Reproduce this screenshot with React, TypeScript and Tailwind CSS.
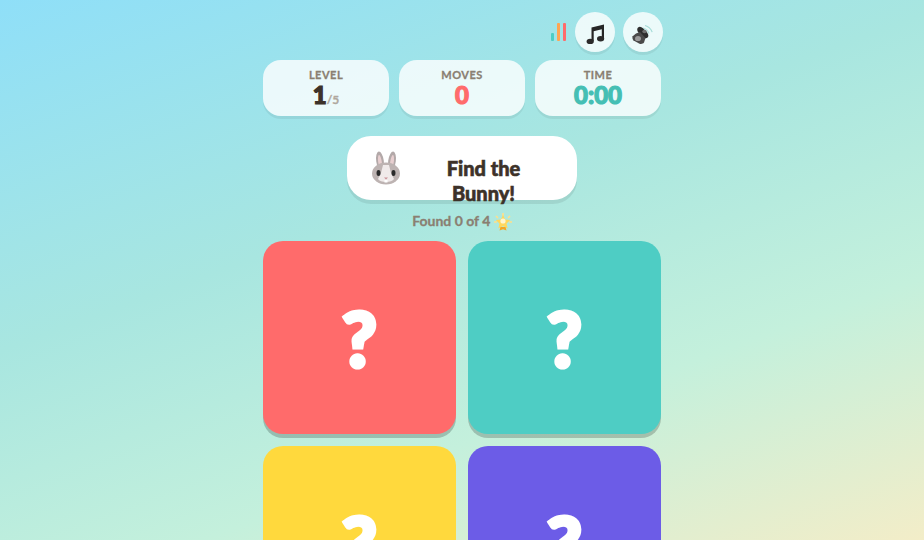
import React from 'react';

const display = "font-['Lato','Noto_Sans',sans-serif]";

const stats = [
  { label: 'LEVEL', value: '1', color: 'text-[#3d3229]', suffix: '/5' },
  { label: 'MOVES', value: '0', color: 'text-[#ff6b6b]' },
  { label: 'TIME', value: '0:00', color: 'text-[#45bfb4]' },
];

const cards = ['bg-[#ff6b6b]', 'bg-[#4ecdc4]', 'bg-[#ffd93d]', 'bg-[#6c5ce7]'];

const NoteIcon = () => (
  <svg width="24" height="24" viewBox="0 0 24 24" className="mt-[4px] ml-[2px]">
    <path d="M7.5 5.5 20 2.5v14h-2.2V7.2L9.7 9.2V19H7.5z" fill="#262626" />
    <ellipse cx="6.2" cy="19.4" rx="3.6" ry="2.7" fill="#2b2b2b" />
    <ellipse cx="16.6" cy="16.8" rx="3.6" ry="2.7" fill="#2b2b2b" />
  </svg>
);

const SpeakerIcon = () => (
  <svg width="26" height="26" viewBox="0 0 26 26" className="mt-[3px]">
    <path d="M15 4.5c3 .8 6 3.4 7.2 6.6" fill="none" stroke="#a6dcd8" strokeWidth="1.2" />
    <path d="M13 7c2.4.6 5 2.8 6 5.5" fill="none" stroke="#b4e2de" strokeWidth="1.2" />
    <path d="M8 6.5c1.6-1.2 3.2-.8 5 .8l4 4.2c1.6 2 1.8 3.6.6 5-1.4 1.2-3 .8-5-.8L8.4 11.6C7 9.8 6.8 7.8 8 6.5z" fill="#2e2e2e" />
    <path d="M6 12.5l4-1.5 5.5 6-1.5 4.5c-1 1.5-3 1.7-4.5 1.2L4.5 20c-1.8-1-2.6-3-1.8-4.8z" fill="#4a4a4a" />
    <ellipse cx="8" cy="17.5" rx="3" ry="2.6" fill="#9a9a9a" />
    <ellipse cx="14.5" cy="10.5" rx="2.2" ry="1.8" fill="#6f6f6f" />
  </svg>
);

const BunnyIcon = () => (
  <svg width="32" height="34" viewBox="0 0 32 34">
    <ellipse cx="10" cy="10" rx="3.8" ry="9.5" fill="#b3a9a9" transform="rotate(-8 10 10)" />
    <ellipse cx="22" cy="10" rx="3.8" ry="9.5" fill="#b3a9a9" transform="rotate(8 22 10)" />
    <ellipse cx="10" cy="11" rx="1.8" ry="7" fill="#e8cfd0" transform="rotate(-8 10 11)" />
    <ellipse cx="22" cy="11" rx="1.8" ry="7" fill="#e8cfd0" transform="rotate(8 22 11)" />
    <ellipse cx="16" cy="22.5" rx="14" ry="11" fill="#bdb3b2" />
    <path d="M13 14h6l2 8 3 6c-2 4-14 4-16 0l3-6z" fill="#f0eaea" />
    <ellipse cx="8.5" cy="22" rx="2" ry="3" fill="#2b2b2b" />
    <ellipse cx="23.5" cy="22" rx="2" ry="3" fill="#2b2b2b" />
    <path d="M14 26.5h4l-2 2z" fill="#c98f96" />
    <rect x="14.5" y="29" width="3" height="2.5" fill="#fff" />
  </svg>
);

const StarIcon = () => (
  <svg width="18" height="18" viewBox="0 0 18 18" className="-my-[2px] inline-block align-[-3px]">
    <path d="M9 0v3M2 3l2 2M16 3l-2 2M0 9h3M18 9h-3" stroke="#ffe08a" strokeWidth="1.6" />
    <path d="M9 2l2.2 4.5 5 .6-3.6 3.4 1 5L9 13l-4.6 2.5 1-5L1.800 7.100l5-.6z" fill="#ffd75e" />
    <circle cx="9" cy="8" r="2.6" fill="#fff6d0" />
    <path d="M6.500 14h5l1 3.500-3.500-1.300-3.500 1.300z" fill="#f5a623" />
  </svg>
);

const App: React.FC = () => {
  return (
    <div className={`h-[540px] w-[924px] overflow-hidden bg-[linear-gradient(160deg,#8fdff8_0%,#a8e6e0_40%,#c4f0dc_70%,#f3edc8_100%)] ${display}`}>
      <div className="mx-auto flex w-[398px] flex-col">
        {/* Top controls */}
        <div className="-mr-[2px] flex h-[48px] items-start justify-end gap-2 pt-[12px]">
          <div className="mt-[11px] mr-[1px] flex h-[18px] items-end gap-[3px]">
            <div className="h-[8px] w-[3px] rounded-[1px] bg-[#4ecdc4]" />
            <div className="h-[18px] w-[3px] rounded-[1px] bg-[#ffa552]" />
            <div className="h-[18px] w-[3px] rounded-[1px] bg-[#ff6b6b]" />
          </div>
          <div className="flex h-10 w-10 items-center justify-center rounded-full bg-white/80 shadow-[0_3px_0_rgba(0,0,0,0.06)]"><NoteIcon /></div>
          <div className="flex h-10 w-10 items-center justify-center rounded-full bg-white/80 shadow-[0_3px_0_rgba(0,0,0,0.06)]"><SpeakerIcon /></div>
        </div>

        {/* Stats */}
        <div className="mt-[12px] flex gap-[10px]">
          {stats.map((s) => (
            <div key={s.label} className="flex h-[56px] w-[126px] flex-col items-center rounded-[18px] bg-white/80 pt-[8px] shadow-[0_3px_0_rgba(0,0,0,0.06)]">
              <div className="text-[11px] leading-[14px] font-bold tracking-[0.5px] text-[#8a7f72] [-webkit-text-stroke:0.3px_#8a7f72]">{s.label}</div>
              <div className={`text-[24px] leading-[26px] font-black ${s.color} [-webkit-text-stroke:1.2px_currentColor]`}>
                {s.value}
                {s.suffix && <span className="text-[12px] font-bold text-[#b0a89e] [-webkit-text-stroke:0.3px_#b0a89e]">{s.suffix}</span>}
              </div>
            </div>
          ))}
        </div>

        {/* Prompt */}
        <div className="mx-auto mt-[20px] flex h-[64px] w-[230px] items-center rounded-[24px] bg-white pl-[23px] pr-[24px] shadow-[0_4px_0_rgba(0,0,0,0.08)]">
          <div className="w-[32px] shrink-0"><BunnyIcon /></div>
          <div className="flex-1 pt-[26px] pl-[12px] text-center text-[20px] leading-[25px] font-black text-[#3d3229] [-webkit-text-stroke:0.6px_#3d3229]">Find the Bunny!</div>
        </div>

        <div className="mt-[13px] h-[16px] text-center text-[14px] leading-[16px] font-bold text-[#8a7f72] [-webkit-text-stroke:0.3px_#8a7f72]">Found 0 of 4 <StarIcon /></div>

        {/* Cards */}
        <div className="mt-[12px] grid grid-cols-2 gap-3">
          {cards.map((c, i) => (
            <div key={i} className={`flex h-[193px] items-center justify-center rounded-[20px] ${c} shadow-[0_4px_0_rgba(0,0,0,0.2)]`}>
              <span className="text-[76px] leading-none font-black text-white [-webkit-text-stroke:4px_#fff]">?</span>
            </div>
          ))}
        </div>
      </div>
    </div>
  );
};

export default App;
